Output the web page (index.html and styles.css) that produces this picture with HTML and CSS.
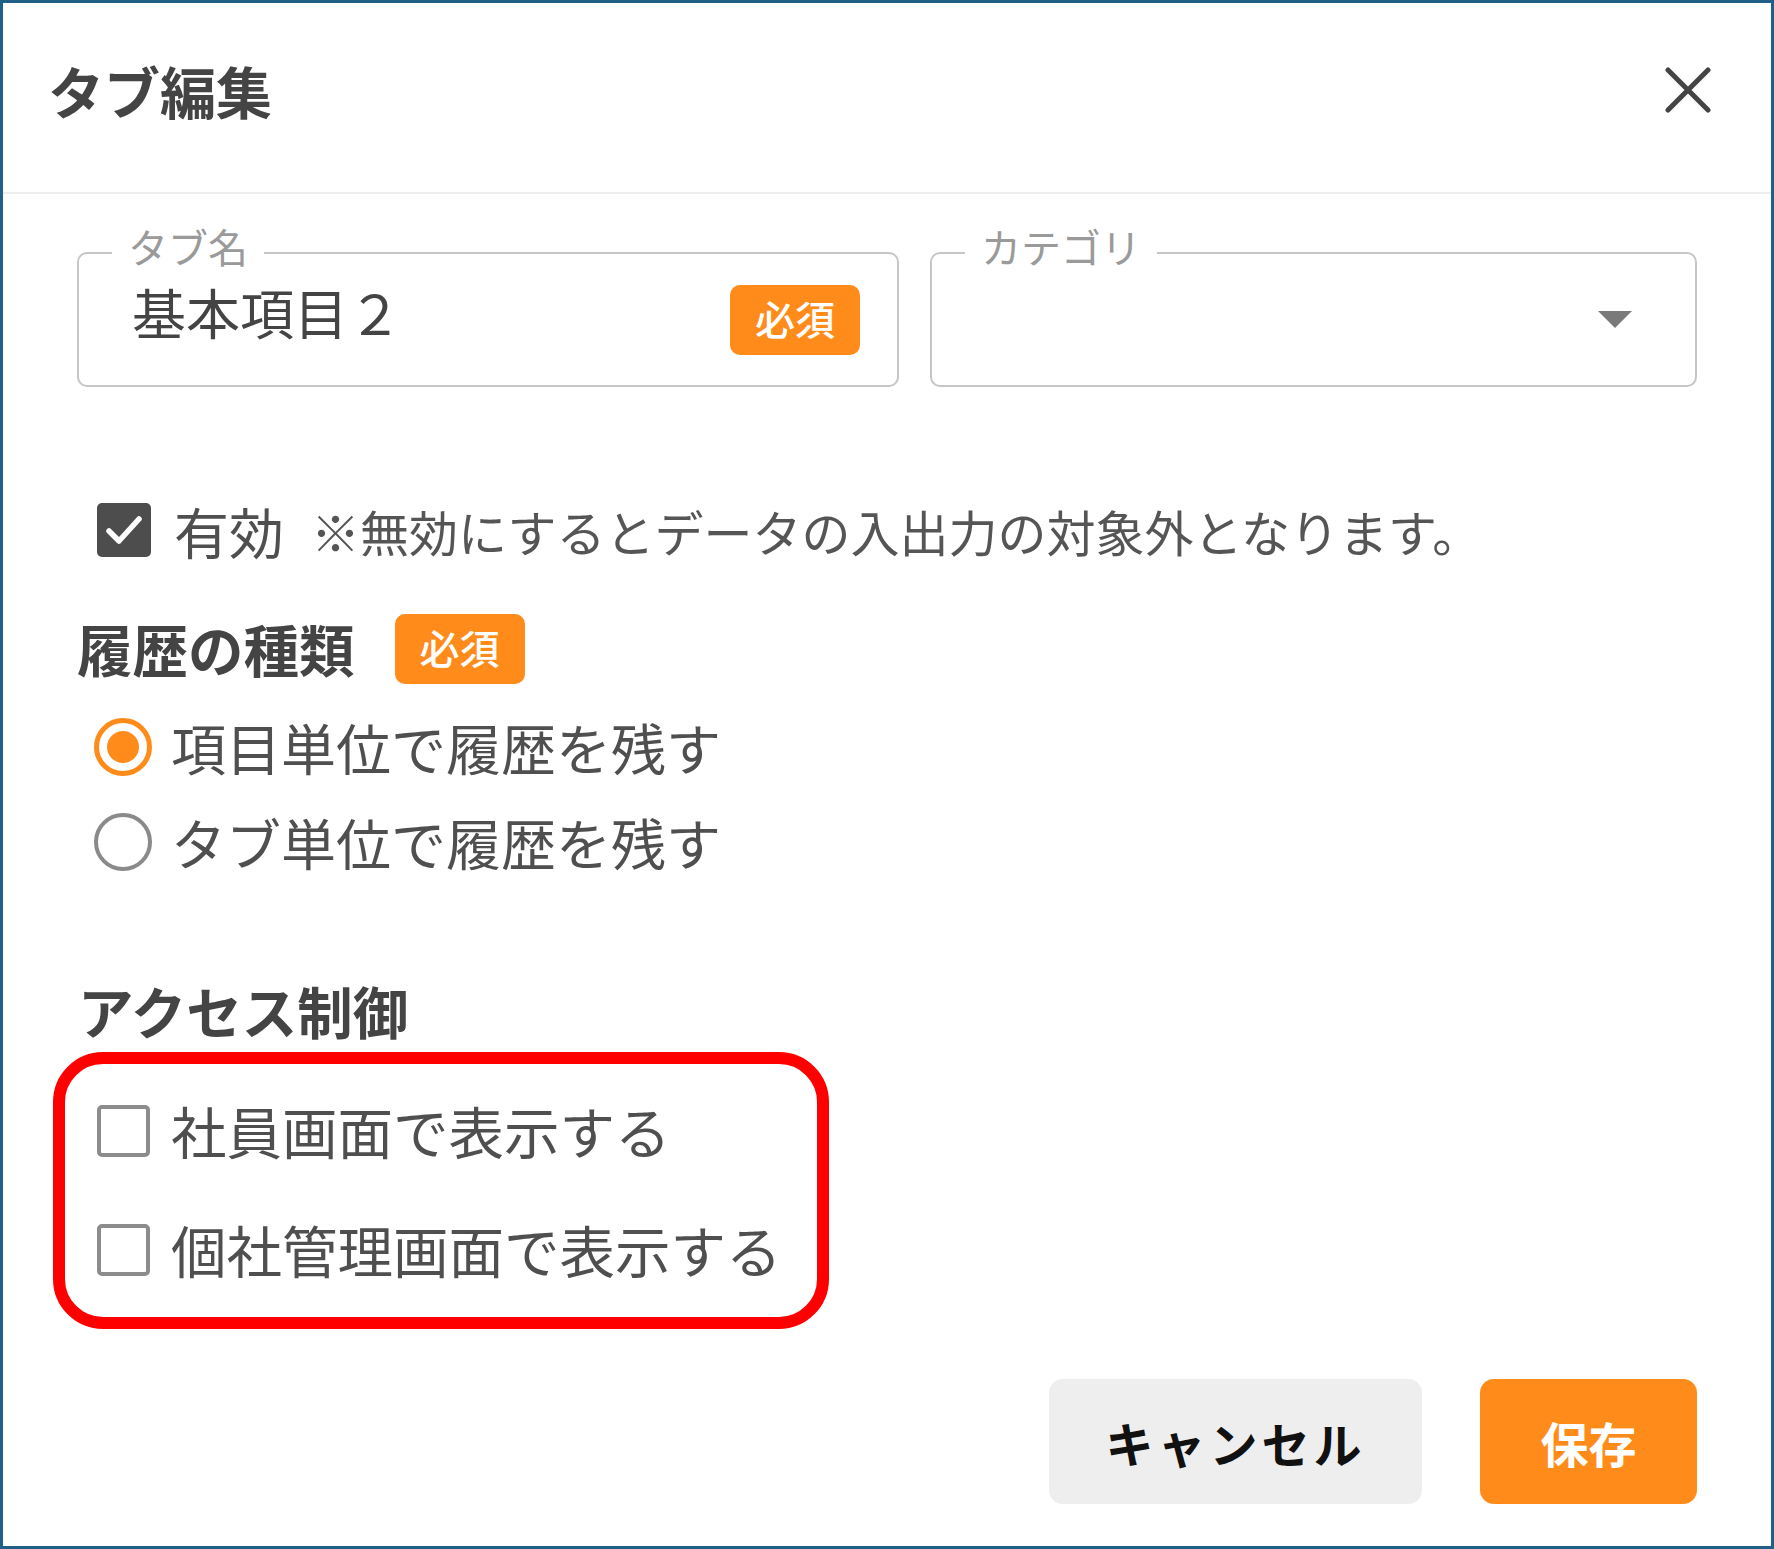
FILE: index.html
```html
<!DOCTYPE html>
<html lang="ja">
<head>
<meta charset="utf-8">
<link rel="stylesheet" href="styles.css">
</head>
<body>
<div class="dialog">
  <div class="header">
    <h1 class="title">タブ編集</h1>
    <svg class="close" viewBox="0 0 46 46" width="46" height="46"><path d="M3 3 L43 43 M43 3 L3 43" stroke="#444" stroke-width="5" stroke-linecap="round" fill="none"/></svg>
  </div>
  <div class="body">
    <div class="fields">
      <div class="field field-name">
        <span class="field-label">タブ名</span>
        <span class="field-value">基本項目２</span>
        <span class="badge">必須</span>
      </div>
      <div class="field field-cat">
        <span class="field-label">カテゴリ</span>
        <span class="arrow"></span>
      </div>
    </div>

    <div class="check-row">
      <span class="cb cb-checked"><svg viewBox="0 0 54 54" width="54" height="54"><path d="M12 28 L22 38 L42 16" stroke="#fff" stroke-width="5.5" fill="none" stroke-linecap="round" stroke-linejoin="round"/></svg></span>
      <span class="label">有効</span>
      <span class="note">※無効にするとデータの入出力の対象外となります。</span>
    </div>

    <div class="section-head">
      <h2 class="heading">履歴の種類</h2>
      <span class="badge">必須</span>
    </div>
    <div class="radio-row">
      <span class="radio radio-on"></span>
      <span class="label">項目単位で履歴を残す</span>
    </div>
    <div class="radio-row">
      <span class="radio"></span>
      <span class="label">タブ単位で履歴を残す</span>
    </div>

    <h2 class="heading access">アクセス制御</h2>
    <div class="highlight">
      <div class="opt-row">
        <span class="cb"></span>
        <span class="label">社員画面で表示する</span>
      </div>
      <div class="opt-row">
        <span class="cb"></span>
        <span class="label">個社管理画面で表示する</span>
      </div>
    </div>

    <div class="actions">
      <button class="btn btn-cancel">キャンセル</button>
      <button class="btn btn-save">保存</button>
    </div>
  </div>
</div>
</body>
</html>
```

FILE: styles.css
```css
* { box-sizing: border-box; }
html, body {
  margin: 0;
  padding: 0;
  background: #fff;
}
body {
  font-family: "Noto Sans CJK JP", "Noto Sans", "Liberation Sans", sans-serif;
  color: #4f4f4f;
}
.dialog {
  width: 1774px;
  height: 1549px;
  border: 3px solid #1f6089;
  display: flex;
  flex-direction: column;
  background: #fff;
}
.header {
  height: 191px;
  flex: none;
  display: flex;
  align-items: center;
  justify-content: space-between;
  padding: 0 60px 15px 45px;
  border-bottom: 2px solid #eeeeee;
}
.title {
  margin: 0;
  font-size: 56px;
  font-weight: 700;
  color: #444;
  line-height: 1;
}
.close { display: block; }
.body {
  flex: 1;
  display: flex;
  flex-direction: column;
  padding: 0 74px;
}
.fields {
  margin-top: 58px;
  display: flex;
  gap: 31px;
}
.field {
  position: relative;
  height: 135px;
  border: 2px solid #c6c6c6;
  border-radius: 10px;
  display: flex;
  align-items: center;
}
.field-name {
  width: 822px;
  padding: 0 37px 0 53px;
}
.field-cat {
  width: 767px;
  justify-content: flex-end;
  padding: 0 63px 0 0;
}
.field-label {
  position: absolute;
  top: -30px;
  left: 33px;
  padding: 0 16px;
  background: #fff;
  font-size: 40px;
  line-height: 44px;
  color: #9a9a9a;
}
.field-value {
  flex: 1;
  font-size: 54px;
  line-height: 1;
  color: #444;
  margin-bottom: 16px;
}
.badge {
  display: inline-flex;
  align-items: center;
  justify-content: center;
  width: 130px;
  height: 70px;
  border-radius: 10px;
  background: #ff8c1a;
  color: #fff;
  font-size: 40px;
  font-weight: 500;
  line-height: 1;
  padding-bottom: 4px;
}
.arrow {
  width: 0;
  height: 0;
  border-left: 17px solid transparent;
  border-right: 17px solid transparent;
  border-top: 17px solid #7a7a7a;
}
.check-row {
  margin-top: 116px;
  height: 54px;
  display: flex;
  align-items: center;
  padding-left: 20px;
}
.cb {
  flex: none;
  width: 54px;
  height: 54px;
  border: 4px solid #8c8c8c;
  border-radius: 5px;
  display: block;
}
.cb-checked {
  border: none;
  background: #4d4d4d;
}
.cb svg { display: block; }
.label {
  margin-left: 23px;
  font-size: 55px;
  line-height: 1;
  color: #4f4f4f;
}
.note {
  margin-left: 27px;
  font-size: 49px;
  line-height: 1;
  color: #555;
}
.section-head {
  margin-top: 57px;
  height: 70px;
  display: flex;
  align-items: center;
}
.heading {
  margin: 0;
  font-size: 55.5px;
  font-weight: 700;
  color: #444;
  line-height: 1;
}
.section-head .badge { margin-left: 40px; }
.radio-row {
  height: 95px;
  display: flex;
  align-items: center;
  padding-left: 17px;
}
.section-head + .radio-row { margin-top: 15px; }
.radio {
  flex: none;
  width: 58px;
  height: 58px;
  border-radius: 50%;
  border: 4px solid #8a8a8a;
  display: flex;
  align-items: center;
  justify-content: center;
}
.radio-on {
  border: 5px solid #ff8c1a;
}
.radio-on::after {
  content: "";
  width: 32px;
  height: 32px;
  border-radius: 50%;
  background: #ff8c1a;
}
.radio-row .label { margin-left: 19px; }
.access {
  margin-top: 81px;
  line-height: 81px;
  height: 81px;
  padding-left: 1px;
}
.highlight {
  margin-top: 1px;
  margin-left: -24px;
  width: 776px;
  border: 12px solid #ff0000;
  border-radius: 50px;
  padding: 7px 0 8px 32px;
}
.opt-row {
  height: 119px;
  display: flex;
  align-items: center;
}
.opt-row .cb {
  width: 53px;
  height: 52px;
}
.opt-row .label {
  margin-left: 21px;
  font-size: 55.5px;
}
.actions {
  margin-top: 50px;
  display: flex;
  justify-content: flex-end;
  gap: 58px;
}
.btn {
  height: 125px;
  border: none;
  border-radius: 14px;
  font-family: "Noto Sans CJK JP", "Noto Sans", sans-serif;
  font-size: 48px;
  font-weight: 700;
  line-height: 1;
  cursor: pointer;
}
.btn-cancel {
  width: 373px;
  background: #eeeeee;
  color: #111;
  letter-spacing: 4px;
}
.btn-save {
  width: 217px;
  background: #ff8c1a;
  color: #fff;
}
```
